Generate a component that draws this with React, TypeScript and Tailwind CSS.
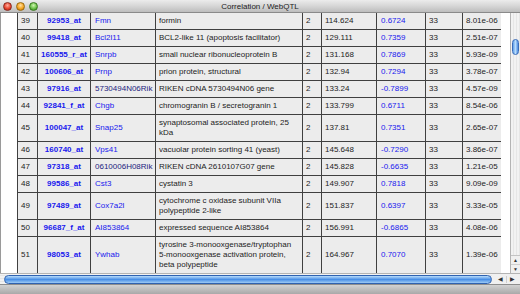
import React from "react";

type Row = {
  n: number;
  probe: string;
  sym: string;
  navy?: boolean;
  desc: string[];
  chr: string;
  mb: string;
  r: string;
  cnt: string;
  p: string;
};

const rows: Row[] = [
  { n: 39, probe: "92953_at", sym: "Fmn", desc: ["formin"], chr: "2", mb: "114.624", r: "0.6724", cnt: "33", p: "8.01e-06" },
  { n: 40, probe: "99418_at", sym: "Bcl2l11", desc: ["BCL2-like 11 (apoptosis facilitator)"], chr: "2", mb: "129.111", r: "0.7359", cnt: "33", p: "2.51e-07" },
  { n: 41, probe: "160555_r_at", sym: "Snrpb", desc: ["small nuclear ribonucleoprotein B"], chr: "2", mb: "131.168", r: "0.7869", cnt: "33", p: "5.93e-09" },
  { n: 42, probe: "100606_at", sym: "Prnp", desc: ["prion protein, structural"], chr: "2", mb: "132.94", r: "0.7294", cnt: "33", p: "3.78e-07" },
  { n: 43, probe: "97916_at", sym: "5730494N06Rik", navy: true, desc: ["RIKEN cDNA 5730494N06 gene"], chr: "2", mb: "133.24", r: "-0.7899", cnt: "33", p: "4.57e-09" },
  { n: 44, probe: "92841_f_at", sym: "Chgb", desc: ["chromogranin B / secretogranin 1"], chr: "2", mb: "133.799", r: "0.6711", cnt: "33", p: "8.54e-06" },
  { n: 45, probe: "100047_at", sym: "Snap25", desc: ["synaptosomal associated protein, 25", "kDa"], chr: "2", mb: "137.81", r: "0.7351", cnt: "33", p: "2.65e-07" },
  { n: 46, probe: "160740_at", sym: "Vps41", desc: ["vacuolar protein sorting 41 (yeast)"], chr: "2", mb: "145.648", r: "-0.7290", cnt: "33", p: "3.86e-07" },
  { n: 47, probe: "97318_at", sym: "0610006H08Rik", navy: true, desc: ["RIKEN cDNA 2610107G07 gene"], chr: "2", mb: "145.828", r: "-0.6635", cnt: "33", p: "1.21e-05" },
  { n: 48, probe: "99586_at", sym: "Cst3", desc: ["cystatin 3"], chr: "2", mb: "149.907", r: "0.7818", cnt: "33", p: "9.09e-09" },
  { n: 49, probe: "97489_at", sym: "Cox7a2l", desc: ["cytochrome c oxidase subunit VIIa", "polypeptide 2-like"], chr: "2", mb: "151.837", r: "0.6397", cnt: "33", p: "3.33e-05" },
  { n: 50, probe: "96687_f_at", sym: "AI853864", desc: ["expressed sequence AI853864"], chr: "2", mb: "156.991", r: "-0.6865", cnt: "33", p: "4.08e-06" },
  { n: 51, probe: "98053_at", sym: "Ywhab", desc: ["tyrosine 3-monooxgenase/tryptophan", "5-monooxgenase activation protein,", "beta polypeptide"], chr: "2", mb: "164.967", r: "0.7070", cnt: "33", p: "1.39e-06" },
];

const td = "border border-[#404040] bg-[#ececec] py-[3px] pl-[3px] pr-0 align-middle whitespace-nowrap leading-[10px]";

export default function App() {
  return (
    <div className="w-[520px] h-[294px] flex flex-col bg-white overflow-hidden font-['Liberation_Sans',Arial,sans-serif] text-[8px] text-[#1c1c1c]">
      {/* Title bar */}
      <div className="h-[13px] shrink-0 grid grid-cols-[1fr_auto_1fr] items-center bg-gradient-to-b from-[#ececec] via-[#d6d6d6] to-[#bdbdbd] border-b border-[#8a8a8a]">
        <div className="flex items-center gap-[4px] pl-[3px]">
          <span className="w-[9px] h-[9px] rounded-full border border-[#8a2a20] bg-[radial-gradient(circle_at_50%_35%,#ffb0a0_0%,#e8452f_55%,#a82010_100%)]" />
          <span className="w-[9px] h-[9px] rounded-full border border-[#9a6a10] bg-[radial-gradient(circle_at_50%_35%,#ffe0a0_0%,#f5a623_55%,#b06a08_100%)]" />
          <span className="w-[9px] h-[9px] rounded-full border border-[#3a7a20] bg-[radial-gradient(circle_at_50%_35%,#d0f5b0_0%,#6cc24a_55%,#2f7a1a_100%)]" />
        </div>
        <div className="text-[8px] leading-[13px] text-[#222]">Correlation / WebQTL</div>
        <div />
      </div>

      {/* Body */}
      <div className="flex h-[260px] shrink-0">
        <div className="w-[17px] shrink-0 border-l border-[#9a9a9a] bg-white" />
        <div className="w-[484px] shrink-0 overflow-hidden">
          <table className="table-fixed border-collapse w-[484px] -mt-[1px]">
            <colgroup>
              <col className="w-[20px]" />
              <col className="w-[53px]" />
              <col className="w-[65px]" />
              <col className="w-[147px]" />
              <col className="w-[19px]" />
              <col className="w-[55px]" />
              <col className="w-[49px]" />
              <col className="w-[37px]" />
              <col className="w-[39px]" />
            </colgroup>
            <tbody>
              {rows.map((r) => (
                <tr key={r.n}>
                  <td className={td}>{r.n}</td>
                  <td className={`${td} !pl-0 text-center font-bold text-[#1818ee]`}>{r.probe}</td>
                  <td className={`${td} !pl-[4px] ${r.navy ? "text-[#23237e]" : "text-[#1818ee]"}`}>{r.sym}</td>
                  <td className={td}>
                    {r.desc.map((d, i) => (
                      <div key={i}>{d}</div>
                    ))}
                  </td>
                  <td className={td}>{r.chr}</td>
                  <td className={td}>{r.mb}</td>
                  <td className={`${td} !pl-[4px] text-[#1818ee]`}>{r.r}</td>
                  <td className={td}>{r.cnt}</td>
                  <td className={td}>{r.p}</td>
                </tr>
              ))}
            </tbody>
          </table>
        </div>
        <div className="w-[9px] shrink-0 bg-white" />
        {/* Vertical scrollbar */}
        <div className="w-[10px] shrink-0 flex flex-col border-l border-[#b4b4b4] bg-[repeating-linear-gradient(90deg,#f2f2f2_0px,#f2f2f2_2px,#e6e6e6_2px,#e6e6e6_3px)]">
          <div className="h-[26px]" />
          <div className="mx-[1px] h-[16px] rounded-full border border-[#3a6cb8] bg-gradient-to-r from-[#5f9ee8] via-[#b8dcfb] to-[#4a8be0]" />
          <div className="flex-1" />
          <div className="h-[18px] flex flex-col items-center justify-center gap-[1px] border-t border-[#c4c4c4] bg-[#f0f0f0] text-[5px] leading-[6px] text-[#333]">
            <span>▲</span>
            <span className="w-full border-t border-[#cfcfcf]" />
            <span>▼</span>
          </div>
        </div>
      </div>

      {/* Horizontal scrollbar */}
      <div className="h-[11px] shrink-0 flex items-center border-t border-[#b4b4b4] bg-[repeating-linear-gradient(0deg,#f2f2f2_0px,#f2f2f2_2px,#e6e6e6_2px,#e6e6e6_3px)]">
        <div className="ml-[4px] w-[488px] h-[9px] rounded-full border border-[#2f62b0] bg-gradient-to-b from-[#b8dcfb] via-[#4a90e6] to-[#9ccaf5]" />
        <div className="flex-1 flex items-center justify-center gap-[3px] text-[6px] leading-[6px] text-[#333] bg-[#f0f0f0] h-full">
          <span>◀</span>
          <span className="h-[7px] border-l border-[#cfcfcf]" />
          <span>▶</span>
        </div>
      </div>

      {/* Bottom strip */}
      <div className="h-[10px] shrink-0 border-t border-[#8e8e8e] bg-gradient-to-b from-[#d2d2d2] to-[#a9a9a9]" />
    </div>
  );
}
